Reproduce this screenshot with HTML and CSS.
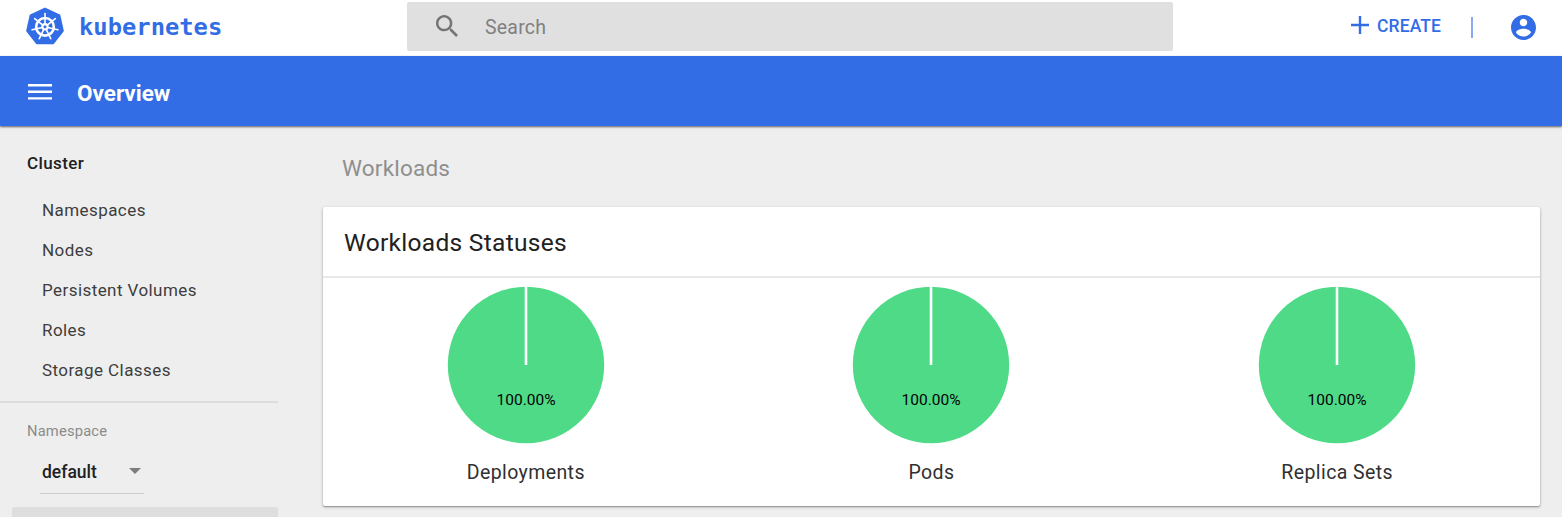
FILE: index.html
```html
<!DOCTYPE html>
<html lang="en">
<head>
<meta charset="utf-8">
<title>Kubernetes Dashboard</title>
<link rel="stylesheet" href="styles.css">
</head>
<body>
<header class="header">
  <div class="brand">
    <svg class="logo" viewBox="0 0 38 38">
      <path fill="#326de6" stroke="#326de6" stroke-width="2" stroke-linejoin="round" d="M19 1.6 33.4 8.4 36.8 23.8 27.2 36.2H10.8L1.2 23.8 4.6 8.4Z"/>
      <g fill="none" stroke="#fff">
        <circle cx="19" cy="19.8" r="8.8" stroke-width="2.6"/>
        <g stroke-width="1.6" stroke-linecap="round">
          <path id="spoke" d="M19 17V6.6"/>
          <use href="#spoke" transform="rotate(51.43 19 19.8)"/>
          <use href="#spoke" transform="rotate(102.86 19 19.8)"/>
          <use href="#spoke" transform="rotate(154.29 19 19.8)"/>
          <use href="#spoke" transform="rotate(205.71 19 19.8)"/>
          <use href="#spoke" transform="rotate(257.14 19 19.8)"/>
          <use href="#spoke" transform="rotate(308.57 19 19.8)"/>
        </g>
        <circle cx="19" cy="19.8" r="2.6" stroke-width="2.2"/>
      </g>
    </svg>
    <span class="brand-name">kubernetes</span>
  </div>
  <div class="search">
    <svg class="search-icon" viewBox="3 3 17.5 17.5"><path fill="#757575" d="M15.5 14h-.79l-.28-.27C15.41 12.59 16 11.11 16 9.5 16 5.91 13.09 3 9.5 3S3 5.91 3 9.5 5.91 16 9.5 16c1.61 0 3.09-.59 4.23-1.57l.27.28v.79l5 4.99L20.49 19l-4.99-5zm-6 0C7.01 14 5 11.99 5 9.5S7.01 5 9.5 5 14 7.01 14 9.5 11.99 14 9.5 14z"/></svg>
    <span class="search-text">Search</span>
  </div>
  <div class="actions">
    <svg class="plus" viewBox="0 0 18 18"><path fill="none" stroke="#326de6" stroke-width="2.4" d="M9 0v18M0 9h18"/></svg>
    <span class="create">CREATE</span>
    <span class="separator"></span>
    <svg class="account" viewBox="2 2 20 20"><path fill="#326de6" d="M12 2C6.48 2 2 6.48 2 12s4.48 10 10 10 10-4.48 10-10S17.52 2 12 2zm0 3c1.66 0 3 1.34 3 3s-1.34 3-3 3-3-1.34-3-3 1.34-3 3-3zm0 14.2c-2.5 0-4.71-1.28-6-3.22.03-1.99 4-3.08 6-3.08 1.99 0 5.97 1.09 6 3.08-1.29 1.94-3.5 3.22-6 3.22z"/></svg>
  </div>
</header>
<div class="toolbar">
  <svg class="menu" viewBox="0 0 24 16"><path fill="#fff" d="M0 0h24v2.4H0zM0 6.6h24V9H0zM0 13.2h24v2.4H0z"/></svg>
  <span class="page-title">Overview</span>
</div>
<div class="body">
  <nav class="sidebar">
    <div class="nav-group">Cluster</div>
    <div class="nav-item">Namespaces</div>
    <div class="nav-item">Nodes</div>
    <div class="nav-item">Persistent Volumes</div>
    <div class="nav-item">Roles</div>
    <div class="nav-item">Storage Classes</div>
    <div class="namespace">
      <div class="namespace-label">Namespace</div>
      <div class="select"><span>default</span><i class="arrow"></i></div>
    </div>
    <div class="active-item"></div>
  </nav>
  <main class="content">
    <h2 class="section-title">Workloads</h2>
    <section class="card">
      <h3 class="card-title">Workloads Statuses</h3>
      <div class="charts">
        <div class="chart">
          <svg class="pie" viewBox="0 0 158 158"><circle cx="79" cy="79" r="78.2" fill="#4fda88"/><path stroke="#fff" stroke-width="2.6" d="M79 0v79"/><text x="79" y="119" text-anchor="middle">100.00%</text></svg>
          <span class="chart-name">Deployments</span>
        </div>
        <div class="chart">
          <svg class="pie" viewBox="0 0 158 158"><circle cx="79" cy="79" r="78.2" fill="#4fda88"/><path stroke="#fff" stroke-width="2.6" d="M79 0v79"/><text x="79" y="119" text-anchor="middle">100.00%</text></svg>
          <span class="chart-name">Pods</span>
        </div>
        <div class="chart">
          <svg class="pie" viewBox="0 0 158 158"><circle cx="79" cy="79" r="78.2" fill="#4fda88"/><path stroke="#fff" stroke-width="2.6" d="M79 0v79"/><text x="79" y="119" text-anchor="middle">100.00%</text></svg>
          <span class="chart-name">Replica Sets</span>
        </div>
      </div>
    </section>
  </main>
</div>
</body>
</html>
```
FILE: styles.css
```css
* { box-sizing: border-box; }
body {
  margin: 0;
  height: 517px;
  overflow: hidden;
  display: flex;
  flex-direction: column;
  background: #eee;
  font-family: Roboto, sans-serif;
  color: #212121;
}
svg { display: block; flex: none; }
.header { display: flex; height: 56px; flex: none; background: #fff; }
.brand { display: flex; align-items: flex-start; width: 407px; padding: 7px 0 0 26px; }
.logo { width: 38px; height: 38px; }
.brand-name {
  margin-left: 15px;
  font: bold 23.8px/40px "DejaVu Sans Mono", monospace;
  color: #326de6;
}
.search {
  display: flex;
  align-items: center;
  width: 766px;
  height: 49px;
  margin-top: 2px;
  padding-left: 29px;
  background: #e0e0e0;
  border-radius: 2px;
}
.search-icon { width: 22px; height: 22px; margin-top: -2px; }
.search-text { margin: 2px 0 0 27px; font-size: 19.5px; color: #808080; letter-spacing: .2px; }
.actions { display: flex; align-items: center; height: 50px; margin-left: 178px; color: #326de6; }
.plus { width: 18px; height: 18px; }
.create { margin: 2px 0 0 8px; font-size: 17.5px; font-weight: 500; width: 64px; letter-spacing: .1px; }
.separator { width: 2px; height: 21px; margin: 4px 38px 0 30px; background: #8aabf1; }
.account { width: 25px; height: 25px; margin-top: 5px; }
.toolbar {
  display: flex;
  align-items: center;
  flex: none;
  height: 70px;
  padding: 0 28px;
  background: #326de6;
  box-shadow: 0 1px 2px rgba(0, 0, 0, .6);
  z-index: 1;
}
.menu { width: 24px; height: 16px; margin-top: 1px; }
.page-title { margin: 3px 0 0 25px; font-size: 22.5px; font-weight: 700; color: #fff; }
.body { display: flex; flex: 1; min-height: 0; }
.sidebar { width: 278px; flex: none; padding-top: 17px; }
.nav-group { padding-left: 27px; margin-bottom: 7px; font-size: 17px; line-height: 40px; font-weight: 500; letter-spacing: .4px; }
.nav-item { padding-left: 42px; font-size: 17px; line-height: 40px; color: #3d3d3d; letter-spacing: .43px; }
.namespace { margin-top: 11px; padding: 17px 0 0 27px; border-top: 2px solid #dcdcdc; }
.namespace-label { font-size: 14.7px; line-height: 22px; letter-spacing: .2px; color: #8b8b8b; }
.select {
  display: flex;
  align-items: center;
  justify-content: space-between;
  width: 104px;
  height: 44px;
  margin: 8px 0 0 13px;
  padding: 0 3px 0 2px;
  border-bottom: 1px solid #ccc;
  font-size: 17.5px;
  font-weight: 500;
}
.arrow { margin-bottom: 2px; border: 6px solid transparent; border-top-color: #7d7d7d; border-bottom: 0; }
.active-item { height: 20px; margin: 13px 0 0 12px; background: #dedede; border-radius: 2px 2px 0 0; }
.content { flex: 1; padding: 24px 22px 0 45px; }
.section-title { margin: 0 0 21px 19px; font-size: 22.5px; line-height: 36px; font-weight: 400; color: #8e8e8e; letter-spacing: .2px; }
.card { height: 299px; background: #fff; border-radius: 2px; box-shadow: 0 1px 3px rgba(0, 0, 0, .3), 0 1px 1px rgba(0, 0, 0, .2); }
.card-title { margin: 0; height: 71px; padding-left: 21px; border-bottom: 2px solid #e8e8e8; font-size: 24.5px; line-height: 72px; font-weight: 400; letter-spacing: .3px; }
.charts { display: grid; grid-template-columns: repeat(3, 1fr); }
.chart { display: flex; flex-direction: column; align-items: center; padding-top: 8px; }
.pie { width: 158px; height: 158px; }
.pie text { font-size: 15.5px; fill: #000; }
.chart-name { margin-top: 14px; font-size: 19.5px; line-height: 30px; letter-spacing: .4px; color: #303030; }
```
